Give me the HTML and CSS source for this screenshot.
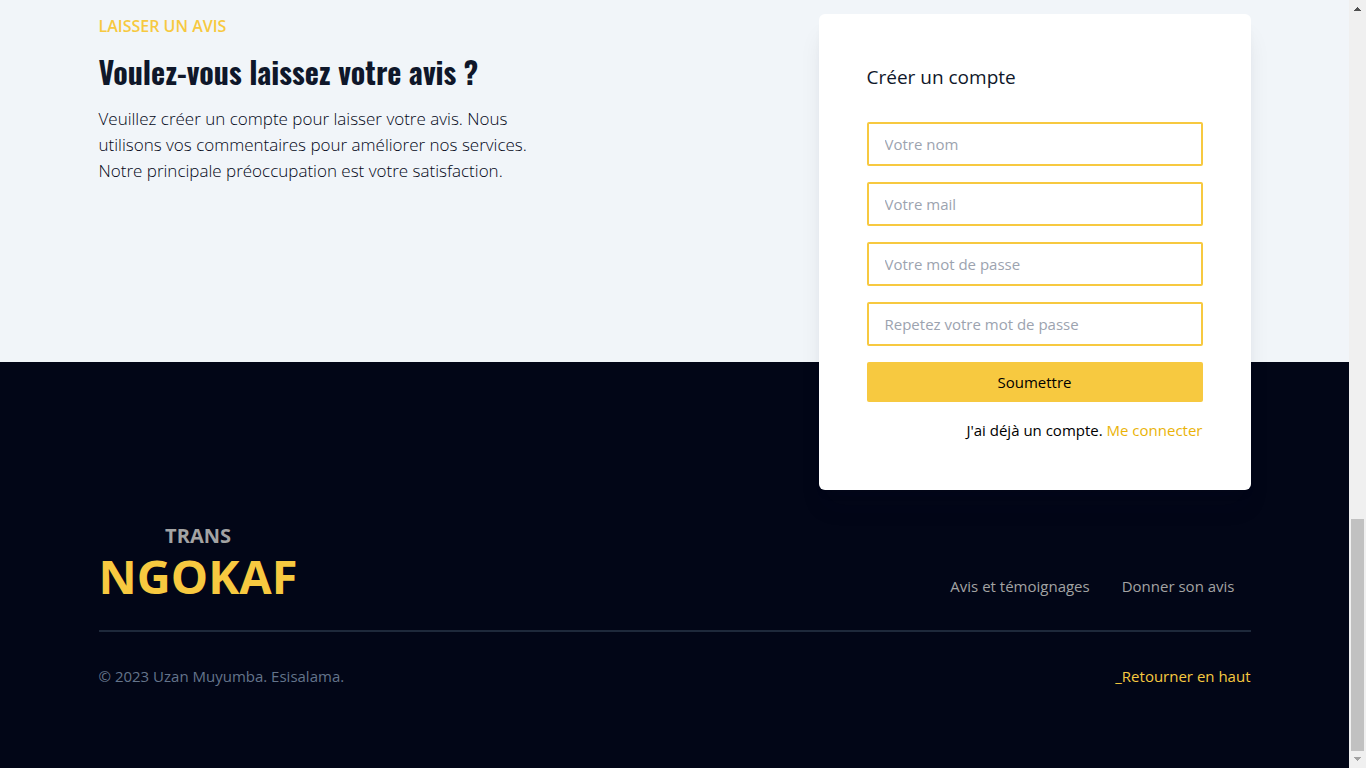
FILE: index.html
```html
<!DOCTYPE html>
<html lang="fr">
<head>
  <meta charset="utf-8">
  <meta name="viewport" content="width=device-width, initial-scale=1">
  <title>Trans Ngokaf</title>
  <link rel="stylesheet" href="styles.css">
</head>
<body>
  <div class="page">
    <section class="review">
      <div class="container review-grid">
        <div class="intro">
          <p class="eyebrow">LAISSER UN AVIS</p>
          <h2 class="heading">Voulez-vous laissez votre avis ?</h2>
          <p class="lead">Veuillez créer un compte pour laisser votre avis. Nous utilisons vos commentaires pour améliorer nos services. Notre principale préoccupation est votre satisfaction.</p>
        </div>
        <form class="card">
          <h3 class="card-title">Créer un compte</h3>
          <div class="fields">
            <input class="field" type="text" aria-label="Votre nom" placeholder="Votre nom">
            <input class="field" type="email" aria-label="Votre mail" placeholder="Votre mail">
            <input class="field" type="password" aria-label="Votre mot de passe" placeholder="Votre mot de passe">
            <input class="field" type="password" aria-label="Repetez votre mot de passe" placeholder="Repetez votre mot de passe">
            <button class="submit" type="submit">Soumettre</button>
            <p class="login">J'ai déjà un compte. <a href="#connexion">Me connecter</a></p>
          </div>
        </form>
      </div>
    </section>
    <footer class="footer">
      <div class="container">
        <div class="footer-top">
          <a class="brand" href="#accueil"><span class="brand-small">TRANS</span><span class="brand-name">NGOKAF</span></a>
          <nav class="footer-nav">
            <a href="#avis">Avis et témoignages</a>
            <a href="#donner">Donner son avis</a>
          </nav>
        </div>
        <div class="footer-bottom">
          <p>© 2023 Uzan Muyumba. Esisalama.</p>
          <a class="to-top" href="#haut">_Retourner en haut</a>
        </div>
      </div>
    </footer>
  </div>
  <div class="scrollbar" aria-hidden="true">
    <svg class="arrow" viewBox="0 0 17 17" shape-rendering="crispEdges"><path fill="#505050" d="M8 7h1v1h1v1h1v1h1v1H5v-1h1V9h1V8h1z"/></svg>
    <div class="track"><div class="thumb"></div></div>
    <svg class="arrow" viewBox="0 0 17 17" shape-rendering="crispEdges"><path fill="#a3a3a3" d="M5 6h7v1h-1v1h-1v1H9v1H8V9H7V8H6V7H5z"/></svg>
  </div>
</body>
</html>
```
FILE: styles.css
```css
* { box-sizing: border-box; }

body {
  margin: 0;
  min-height: 100vh;
  display: flex;
  font-family: "Segoe UI", "Open Sans", "Noto Sans", sans-serif;
  font-size: 15px;
  line-height: 24px;
  color: #020617;
}

h2, h3, p { margin: 0; }
a { text-decoration: none; }

.page {
  flex: 1;
  min-width: 0;
  display: flex;
  flex-direction: column;
  background: #f1f5f9;
}

.container {
  width: 100%;
  max-width: 1200px;
  margin: 0 auto;
  padding: 0 24px;
}

.review { padding-top: 14px; }

.review-grid {
  display: flex;
  justify-content: space-between;
  align-items: flex-start;
  gap: 32px;
}

.intro { max-width: 448px; }

.eyebrow {
  font-weight: 600;
  font-size: 16px;
  color: #f7c940;
}

.heading {
  margin: 12px 0;
  font-family: Oswald, "Roboto Condensed", "Open Sans Condensed", "Liberation Sans Narrow", sans-serif;
  font-size: 30px;
  line-height: 44px;
  font-weight: 700;
  color: #0f172a;
}

.lead {
  font-size: 17px;
  line-height: 26px;
  font-weight: 300;
  color: #020617;
}

.card {
  position: relative;
  width: 432px;
  margin-bottom: -128px;
  padding: 48px;
  background: #fff;
  border-radius: 6px;
  box-shadow: 0 20px 25px -5px rgba(15, 23, 42, 0.1), 0 8px 10px -6px rgba(15, 23, 42, 0.1);
}

.card-title {
  margin-bottom: 30px;
  font-size: 19px;
  line-height: 30px;
  font-weight: 400;
  color: #0f172a;
}

.fields {
  display: flex;
  flex-direction: column;
  gap: 16px;
}

.field {
  width: 100%;
  height: 44px;
  padding: 8px 16px;
  border: 2px solid #f7c940;
  border-radius: 2px;
  background: #fff;
  font: inherit;
}

.field::placeholder { color: #9ca3af; opacity: 1; }

.submit {
  padding: 8px;
  border: 0;
  border-radius: 2px;
  background: #f7c940;
  color: #000;
  font: inherit;
}

.login { text-align: right; color: #000; }
.login a { color: #eab308; }

.footer {
  flex: 1;
  padding: 160px 0 64px;
  background: #020617;
}

.footer-top {
  display: flex;
  justify-content: space-between;
  align-items: flex-end;
  padding-bottom: 26px;
  border-bottom: 2px solid #1e293b;
}

.brand {
  display: flex;
  flex-direction: column;
  align-items: center;
  font-weight: 700;
}

.brand-small { font-size: 20px; line-height: 28px; color: #a3a3a3; }
.brand-name { font-size: 47px; line-height: 52px; padding-bottom: 2px; color: #f7c940; }

.footer-nav {
  display: flex;
  gap: 32px;
  padding: 0 16px 6px;
}

.footer-nav a { color: #a3a3a3; }

.footer-bottom {
  display: flex;
  justify-content: space-between;
  padding-top: 32px;
  color: #64748b;
}

.to-top { color: #f7c940; }

.scrollbar {
  width: 17px;
  height: 100vh;
  display: flex;
  flex-direction: column;
  background: #f0f0f0;
}

.arrow { display: block; width: 17px; height: 17px; }

.track {
  flex: 1;
  display: flex;
  flex-direction: column;
  justify-content: flex-end;
  padding: 0 2px;
}

.thumb { height: 232px; background: #c1c1c1; }
```
